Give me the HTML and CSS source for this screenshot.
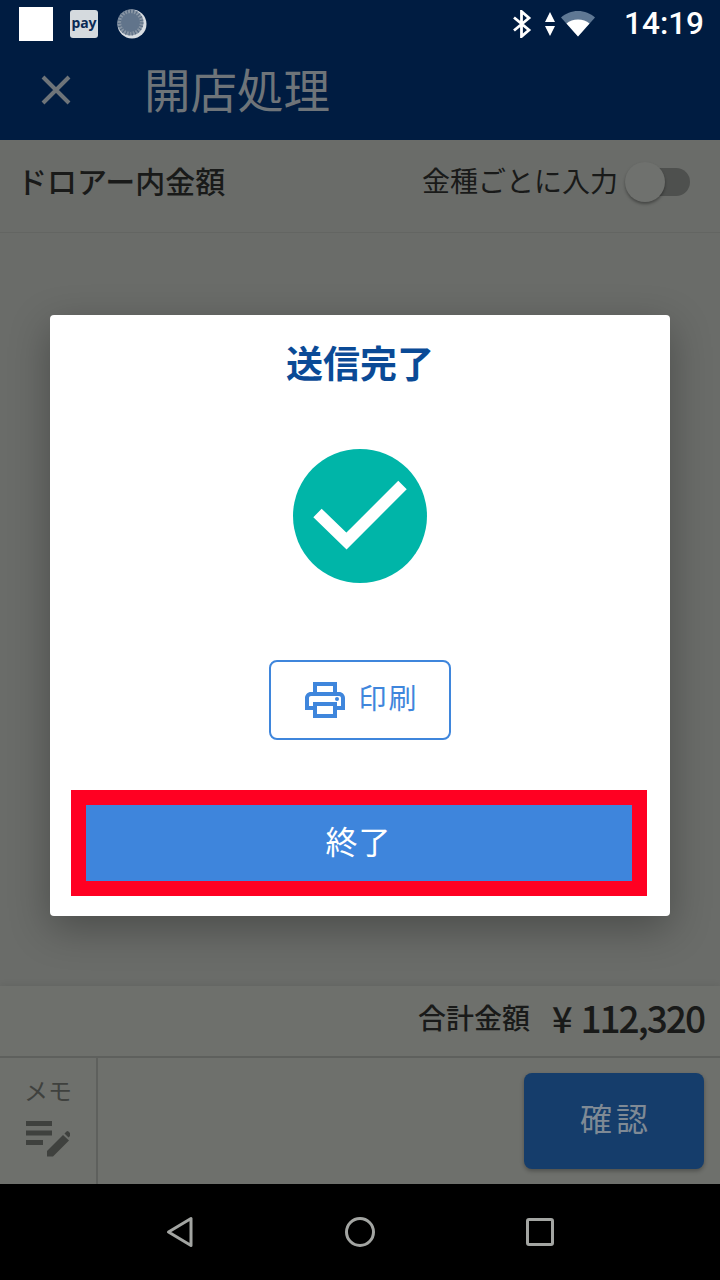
FILE: index.html
```html
<!DOCTYPE html>
<html lang="ja">
<head>
    <meta charset="UTF-8">
    <meta name="viewport" content="width=device-width, initial-scale=1.0">
    <title>開店処理</title>
    <link rel="stylesheet" href="styles.css">
</head>
<body>
    <div id="screen">
        <div class="status-bar">
            <div class="status-left">
                <div class="notice-square"></div>
                <div class="notice-pay">pay</div>
                <svg class="notice-dial" width="30" height="30" viewBox="0 0 30 30">
                    <circle cx="15" cy="15" r="14.500" fill="#d8dde2"/>
                    <circle cx="13.500" cy="13.500" r="13" fill="#8794a3"/>
                    <circle cx="13.500" cy="13.500" r="11" fill="none" stroke="#566a82" stroke-width="4" stroke-dasharray="1 2"/>
                    <circle cx="13.500" cy="13.500" r="9.500" fill="#61748b"/>
                </svg>
            </div>
            <div class="status-right">
                <svg class="icon-bt" width="22" height="28" viewBox="0 0 22 28">
                    <path d="M3 7.500L18 20l-7.500 6.500V1.500L18 8 3 20.500" fill="none" stroke="#fff" stroke-width="2.800"/>
                </svg>
                <svg class="icon-data" width="10" height="24" viewBox="0 0 10 24">
                    <path d="M5 0l5 10H0zM5 24L0 14h10z" fill="#fff"/>
                </svg>
                <svg class="icon-wifi" width="36" height="28" viewBox="0 0 36 28">
                    <path d="M18 26.500L1 7.500C5.500 3.500 11.500 1 18 1s12.500 2.500 17 6.500z" fill="#5f7894"/>
                    <path d="M18 26.500L6.500 13.500C9.500 11 13.500 9.500 18 9.500s8.500 1.500 11.500 4z" fill="#fff"/>
                </svg>
                <span class="status-time">14:19</span>
            </div>
        </div>
        <div class="app-bar">
            <svg class="icon-close" width="32" height="32" viewBox="0 0 32 32">
                <path d="M3 3l26 26M29 3L3 29" stroke="#6e7479" stroke-width="4" fill="none"/>
            </svg>
            <h1 class="app-title">開店処理</h1>
        </div>
        <div class="drawer-row">
            <span class="drawer-label">ドロアー内金額</span>
            <div class="drawer-toggle">
                <span class="toggle-label">金種ごとに入力</span>
                <div class="toggle">
                    <div class="toggle-knob"></div>
                </div>
            </div>
        </div>
        <div class="content"></div>
        <div class="total-row">
            <span class="total-label">合計金額</span>
            <span class="total-yen">¥</span>
            <span class="total-value">112,320</span>
        </div>
        <div class="footer">
            <div class="memo">
                <span class="memo-label">メモ</span>
                <svg width="44" height="36" viewBox="0 0 44 36">
                    <path d="M0 0h26v5H0zM0 9.500h26v5H0zM0 19h17v5H0z" fill="#3f413e"/>
                    <path d="M21 30l16-16 6 5.500-16 16H21zM38.500 12.500l2-2q1-1 2 0l2 2q1 1 0 2l-2 2z" fill="#3f413e"/>
                </svg>
            </div>
            <div class="footer-main">
                <button class="confirm-button">確認</button>
            </div>
        </div>
        <div class="nav-bar">
            <svg width="28" height="32" viewBox="0 0 28 32">
                <path d="M25 2.500v27L2.500 16z" fill="none" stroke="#a3a5a2" stroke-width="3" stroke-linejoin="round"/>
            </svg>
            <svg width="32" height="32" viewBox="0 0 32 32">
                <circle cx="16" cy="16" r="13.500" fill="none" stroke="#a3a5a2" stroke-width="3"/>
            </svg>
            <svg width="28" height="28" viewBox="0 0 28 28">
                <rect x="1.500" y="1.500" width="25" height="25" rx="1.500" fill="none" stroke="#a3a5a2" stroke-width="3"/>
            </svg>
        </div>

        <div class="modal">
            <h2 class="modal-title">送信完了</h2>
            <svg class="modal-check" width="134" height="134" viewBox="0 0 134 134">
                <circle cx="67" cy="67" r="67" fill="#00b5a8"/>
                <path d="M24.500 64l29 28 56-56" fill="none" stroke="#fff" stroke-width="12"/>
            </svg>
            <button class="print-button">
                <svg width="48" height="48" viewBox="0 0 24 24">
                    <path d="M19 8h-1V3H6v5H5c-1.660 0-3 1.340-3 3v6h4v4h12v-4h4v-6c0-1.660-1.340-3-3-3zM8 5h8v3H8V5zm8 14H8v-4h8v4zm2-4v-2H6v2H4v-4c0-.55.45-1 1-1h14c.55 0 1 .45 1 1v4h-2z" fill="#3f86dc"/>
                    <circle cx="18" cy="11.500" r="1" fill="#3f86dc"/>
                </svg>
                <span class="print-label">印刷</span>
            </button>
            <div class="finish-frame">
                <button class="finish-button">終了</button>
            </div>
        </div>
    </div>
</body>
</html>
```

FILE: styles.css
```css
* {
    box-sizing: border-box;
}
body {
    margin: 0;
    font-family: "Noto Sans CJK JP", "Noto Sans", sans-serif;
    background-color: #000;
}
button {
    font-family: inherit;
    border: none;
    padding: 0;
}
#screen {
    position: relative;
    width: 720px;
    height: 1280px;
    display: flex;
    flex-direction: column;
    overflow: hidden;
    background-color: #6a6c69;
}
.status-bar {
    height: 48px;
    padding: 0 16px 0 19px;
    display: flex;
    justify-content: space-between;
    align-items: center;
    background-color: #001c41;
}
.status-left, .status-right {
    display: flex;
    align-items: center;
}
.notice-square {
    width: 34px;
    height: 34px;
    background-color: #fff;
}
.notice-pay {
    width: 28px;
    height: 28px;
    margin-left: 17px;
    border-radius: 3px;
    background-color: #d5dade;
    color: #0a2a55;
    font-family: "Noto Sans", sans-serif;
    font-size: 14px;
    font-weight: 700;
    line-height: 26px;
    text-align: center;
}
.notice-dial {
    margin-left: 19px;
}
.icon-data {
    margin-left: 12px;
}
.icon-wifi {
    margin-left: 5px;
}
.status-time {
    margin-left: 28px;
    color: #fff;
    font-family: Roboto, sans-serif;
    font-size: 31.500px;
    font-weight: 500;
    line-height: 48px;
}
.app-bar {
    height: 92px;
    padding: 0 0 8px 40px;
    display: flex;
    align-items: center;
    background-color: #001c41;
}
.app-title {
    margin: 0 0 4px 72px;
    color: #6e7479;
    font-size: 46.500px;
    font-weight: 400;
    line-height: 60px;
}
.drawer-row {
    height: 93px;
    padding: 0 30px 8px 17px;
    display: flex;
    justify-content: space-between;
    align-items: center;
    border-bottom: 1px solid #636562;
}
.drawer-label {
    margin-bottom: 4px;
    color: #191a19;
    font-size: 30px;
    font-weight: 500;
}
.drawer-toggle {
    display: flex;
    align-items: center;
}
.toggle-label {
    margin-bottom: 4px;
    color: #191a19;
    font-size: 28px;
}
.toggle {
    position: relative;
    width: 62px;
    height: 28px;
    margin-left: 10px;
    border-radius: 14px;
    background-color: #4e504e;
}
.toggle-knob {
    position: absolute;
    left: -3px;
    top: -6px;
    width: 40px;
    height: 40px;
    border-radius: 50%;
    background-color: #6f716e;
    box-shadow: 0 2px 3px rgba(0, 0, 0, 0.35);
}
.content {
    flex: 1;
}
.total-row {
    height: 72px;
    padding: 0 16px 8px 0;
    display: flex;
    justify-content: flex-end;
    align-items: center;
    background-color: #6e706c;
    border-bottom: 2px solid #5e605d;
    box-shadow: 0 -2px 6px rgba(0, 0, 0, 0.06);
    color: #191a19;
}
.total-label {
    font-size: 28px;
    font-weight: 500;
}
.total-yen {
    margin-left: 22px;
    font-size: 36px;
    font-weight: 500;
}
.total-value {
    margin-left: 8px;
    font-size: 37px;
    font-weight: 500;
    letter-spacing: -2px;
}
.footer {
    height: 126px;
    display: flex;
    background-color: #6e706c;
}
.memo {
    width: 98px;
    padding: 15px 0 0 0;
    display: flex;
    flex-direction: column;
    align-items: center;
    border-right: 2px solid #5e605d;
    color: #3f413e;
    font-size: 24px;
    line-height: 34px;
}
.memo svg {
    margin-top: 14px;
}
.footer-main {
    flex: 1;
    padding: 15px 16px 0 0;
    display: flex;
    justify-content: flex-end;
}
.confirm-button {
    width: 180px;
    height: 96px;
    padding: 0 0 8px 4px;
    border-radius: 8px;
    background-color: #153d6b;
    color: #7f8a95;
    font-size: 32px;
    letter-spacing: 4px;
    box-shadow: 0 2px 4px rgba(0, 0, 0, 0.3);
}
.nav-bar {
    height: 96px;
    padding: 0 0 0 166px;
    display: flex;
    align-items: center;
    gap: 150px;
    background-color: #000;
}
.modal {
    position: absolute;
    left: 50px;
    top: 315px;
    width: 620px;
    height: 601px;
    padding: 18px 21px 20px;
    display: flex;
    flex-direction: column;
    align-items: center;
    border-radius: 4px;
    background-color: #fff;
    box-shadow: 0 12px 40px rgba(0, 0, 0, 0.3);
}
.modal-title {
    margin: 0;
    color: #0a4a96;
    font-size: 37px;
    font-weight: 700;
    line-height: 58px;
}
.modal-check {
    margin-top: 58px;
}
.print-button {
    width: 182px;
    height: 80px;
    margin-top: 77px;
    display: flex;
    justify-content: center;
    align-items: center;
    gap: 9px;
    border: 2px solid #3f86dc;
    border-radius: 8px;
    background-color: #fff;
    color: #3f86dc;
    font-size: 28px;
}
.print-label {
    margin-bottom: 6px;
    letter-spacing: 2px;
}
.finish-frame {
    width: 576px;
    height: 106px;
    margin: 50px 0 0 -3px;
    border: 15px solid #ff0022;
}
.finish-button {
    width: 100%;
    height: 100%;
    padding-bottom: 6px;
    background-color: #3e85dc;
    color: #fff;
    font-size: 32px;
    letter-spacing: 1px;
}
```
